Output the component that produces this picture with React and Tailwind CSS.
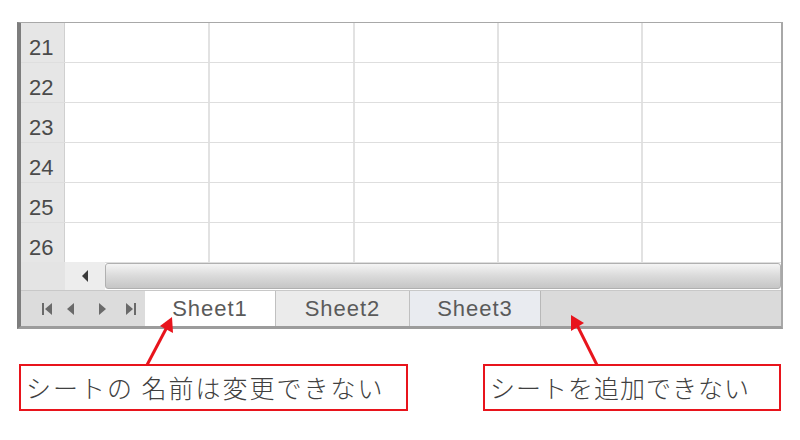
import React from "react";

const rows = [21, 22, 23, 24, 25, 26];
const cols = ["w-[145px]", "w-[145px]", "w-[144px]", "w-[144px]", "flex-1"];

function NavIcon({ type }) {
  const c = "#6a6a6a";
  return (
    <svg width="14" height="14" viewBox="0 0 14 14">
      {type === "first" && (
        <>
          <rect x="2" y="1" width="2" height="12" fill={c} />
          <polygon points="12,1 12,13 5,7" fill={c} />
        </>
      )}
      {type === "prev" && <polygon points="10,1 10,13 3,7" fill={c} />}
      {type === "next" && <polygon points="4,1 4,13 11,7" fill={c} />}
      {type === "last" && (
        <>
          <polygon points="2,1 2,13 9,7" fill={c} />
          <rect x="10" y="1" width="2" height="12" fill={c} />
        </>
      )}
    </svg>
  );
}

export default function App() {
  return (
    <div className="relative w-[800px] h-[440px] bg-white overflow-hidden font-['Liberation_Sans',sans-serif]">
      <div className="pt-[22px] pl-[17px]">
        <div className="w-[766px] border-l-[4px] border-l-[#7d7d7d] border-t-[1px] border-t-[#a8a8a8] border-r-[2px] border-r-[#a8a8a8] border-b-[3px] border-b-[#9c9c9c]">
          {rows.map((r) => (
            <div key={r} className="flex h-[40px] border-b border-[#dedede]">
              <div className="w-[44px] bg-[#e6e6e6] border-r border-[#d0d0d0] flex items-end justify-start pl-[8px] pb-[1px]">
                <span className="text-[22px] leading-[26px] text-[#4a4a4a]">{r}</span>
              </div>
              {cols.map((w, i) => (
                <div key={i} className={`${w} h-full ${i < 4 ? "border-r-2 border-[#e2e2e2]" : ""}`} />
              ))}
            </div>
          ))}
          <div className="flex h-[28px] -mt-[1px]">
            <div className="w-[44px] bg-[#e4e4e4]" />
            <div className="w-[40px] bg-[#ededed] flex items-center justify-center">
              <svg width="8" height="12" viewBox="0 0 8 12">
                <polygon points="7,0 7,12 1,6" fill="#3a3a3a" />
              </svg>
            </div>
            <div className="flex-1 my-[1px] border border-[#b0b0b0] rounded-[3px] bg-gradient-to-b from-[#f4f4f4] via-[#dadada] to-[#c6c6c6]" />
          </div>
          <div className="flex h-[36px] bg-[#dcdcdc] border-t border-[#c8c8c8]">
            <div className="w-[124px] flex items-center">
              <div className="w-[35px] flex justify-end pr-[2px]"><NavIcon type="first" /></div>
              <div className="w-[30px] flex justify-center"><NavIcon type="prev" /></div>
              <div className="w-[32px] flex justify-center"><NavIcon type="next" /></div>
              <div className="w-[26px] flex justify-center"><NavIcon type="last" /></div>
            </div>
            <div className="w-[131px] bg-white border-r border-[#c0c0c0] flex items-center justify-center">
              <span className="text-[22px] tracking-[1px] text-[#5a5a5a]">Sheet1</span>
            </div>
            <div className="w-[134px] bg-[#ebebeb] border-r border-[#c0c0c0] flex items-center justify-center">
              <span className="text-[22px] tracking-[1px] text-[#5a5a5a]">Sheet2</span>
            </div>
            <div className="w-[131px] bg-[#e9ebf0] border-r border-[#b8b8b8] flex items-center justify-center">
              <span className="text-[22px] tracking-[1px] text-[#5a5a5a]">Sheet3</span>
            </div>
            <div className="flex-1 bg-[#dadada]" />
          </div>
        </div>
      </div>

      <div className="flex mt-[35px]">
        <div className="ml-[19px] w-[389px] h-[47px] border-2 border-[#e8141c] flex items-center pl-[5px]">
          <span className="text-[25px] font-light text-[#404040] font-['Noto_Sans_CJK_JP',sans-serif] tracking-[2px] whitespace-nowrap">シートの 名前は変更できない</span>
        </div>
        <div className="ml-[75px] w-[298px] h-[47px] border-2 border-[#e8141c] flex items-center pl-[5px]">
          <span className="text-[25px] font-light text-[#404040] font-['Noto_Sans_CJK_JP',sans-serif] tracking-[1px] whitespace-nowrap">シートを追加できない</span>
        </div>
      </div>

      <svg className="absolute left-0 top-0 pointer-events-none" width="800" height="440">
        <line x1="147" y1="365" x2="167" y2="327" stroke="#e8141c" strokeWidth="3" />
        <polygon points="172,317 173,333 160,326" fill="#e8141c" />
        <line x1="597" y1="365" x2="577" y2="325" stroke="#e8141c" strokeWidth="3" />
        <polygon points="571,315 584,323 571,331" fill="#e8141c" />
      </svg>
    </div>
  );
}
